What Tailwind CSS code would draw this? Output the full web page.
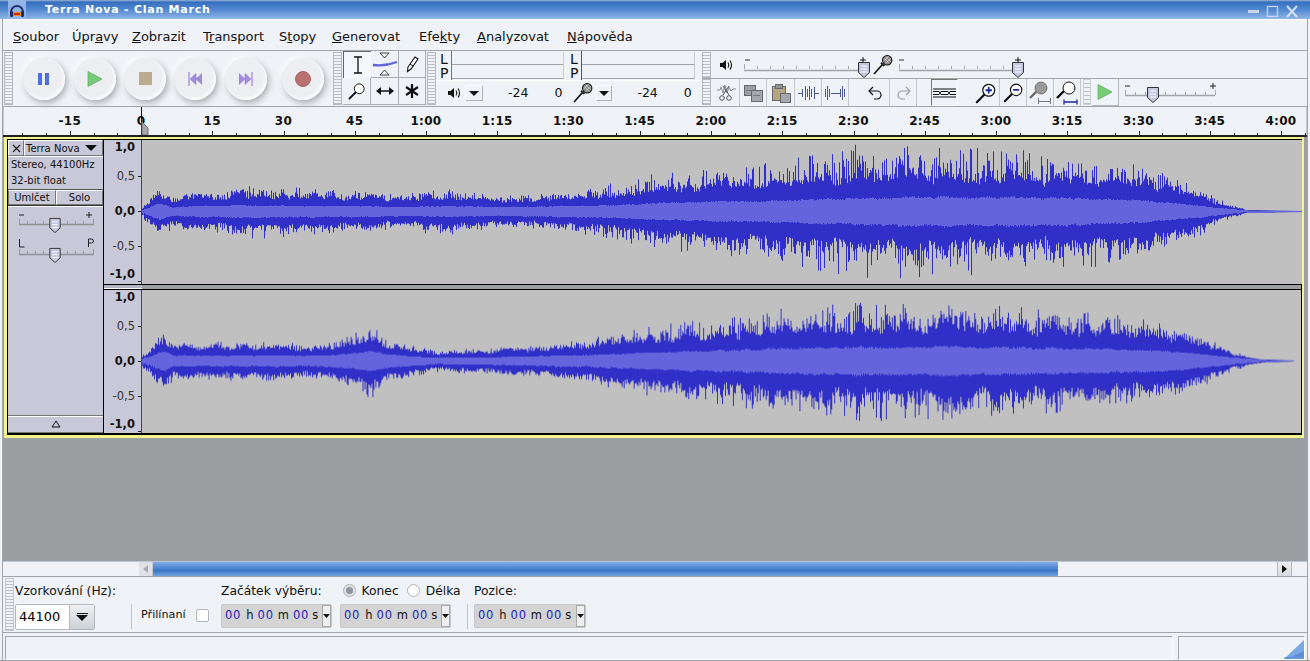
<!DOCTYPE html>
<html lang="cs">
<head>
<meta charset="UTF-8">
<title>Terra Nova - Clan March</title>
<script src="https://cdn.jsdelivr.net/npm/@tailwindcss/browser@4"></script>
</head>
<body class="bg-[#eff2f6]">
<svg class="hidden" width="0" height="0">
  <defs>
    <symbol id="thumb" viewBox="0 0 14 18"><path d="M1.500 1.500h11v10l-5.500 5-5.500-5z" fill="#c4c8e0" stroke="#333" stroke-width="1"/><path d="M4 5h6M4 8h6M4 11h6" stroke="#fff"/></symbol>
    <symbol id="spk" viewBox="0 0 14 14"><path d="M1 5h2.500l3.500-3v10l-3.500-3h-2.500z" fill="#111"/><path d="M9 4.500c1 1.500 1 3.500 0 5M11 2.500c2 2.500 2 6.500 0 9" fill="none" stroke="#111" stroke-width="1.100"/></symbol>
    <symbol id="mic" viewBox="0 0 20 20"><path d="M1 19l8-9" stroke="#111" stroke-width="1.600"/><path d="M7 9l3 3 1.500-1-3.500-3.500z" fill="#222"/><circle cx="13.500" cy="6" r="4.500" fill="#888" stroke="#111"/><path d="M10.500 4l5 5M12 2.500l5 5M15 2l-5 5M17 4l-5 5" stroke="#ddd" stroke-width=".6"/></symbol>
    <symbol id="lens" viewBox="0 0 24 24"><path d="M2 22l8-8" stroke="#111" stroke-width="2.400" stroke-linecap="round"/><circle cx="15" cy="9" r="6.500" fill="#fff" stroke="#111" stroke-width="1.300"/></symbol>
  </defs>
</svg>

<div class="w-[1310px] h-[661px] flex flex-col overflow-hidden bg-[#eff2f6] text-[12px] text-[#111] font-['DejaVu_Sans',sans-serif] border-b border-[#9a9ea2] relative">

  <!-- title bar -->
  <div class="h-[19px] shrink-0 flex items-center bg-[linear-gradient(to_bottom,#9db3d3_0,#356fbe_2px,#4f86cf_9px,#8fb5e8_19px)]">
    <div class="w-[18px] h-[19px] ml-[8px] bg-[#90b4e6] flex items-center justify-center">
      <svg width="16" height="16" viewBox="0 0 16 16"><path d="M2 10a6 6 0 0 1 12 0" fill="none" stroke="#22316e" stroke-width="2"/><rect x="1" y="9" width="3" height="6" rx="1" fill="#1c2a68"/><rect x="12" y="9" width="3" height="6" rx="1" fill="#1c2a68"/><rect x="4" y="10" width="8" height="4" fill="#e88a1c"/><path d="M5 12h6" stroke="#d02a20" stroke-width="2"/></svg>
    </div>
    <span class="ml-[19px] pt-[2px] text-white font-bold text-[11px] tracking-[0.75px]">Terra Nova - Clan March</span>
    <div class="ml-auto mr-[11px] pt-[3px] flex items-center gap-[6px]">
      <svg width="13" height="13" viewBox="0 0 13 13"><path d="M1 6.500h11" stroke="#c7d6ea" stroke-width="3"/></svg>
      <svg width="13" height="13" viewBox="0 0 13 13"><rect x="1.500" y="1.500" width="10" height="10" fill="none" stroke="#c7d6ea" stroke-width="1.300"/></svg>
      <svg width="14" height="13" viewBox="0 0 14 13"><path d="M2 1l10 11M12 1l-10 11" stroke="#d5e0ef" stroke-width="2"/></svg>
    </div>
  </div>

  <!-- menu -->
  <div class="h-[31px] shrink-0 mx-[3px] border-t border-white flex items-center pl-[10px] pt-[4px] text-[13px] whitespace-nowrap">
    <span class="w-[59px]"><u>S</u>oubor</span><span class="w-[60px]">Úpr<u>a</u>vy</span><span class="w-[71px]"><u>Z</u>obrazit</span><span class="w-[76px]">T<u>r</u>ansport</span><span class="w-[53px]">S<u>t</u>opy</span><span class="w-[87px]"><u>G</u>enerovat</span><span class="w-[58px]">Efe<u>k</u>ty</span><span class="w-[90px]"><u>A</u>nalyzovat</span><span><u>N</u>ápověda</span>
  </div>

  <!-- toolbars -->
  <div class="h-[57px] shrink-0 mx-[3px] border-y border-[#a3a6a9] flex pl-[1px]">
    <div class="w-[9px] my-[1px] border border-[#b6b9bd] bg-[repeating-linear-gradient(to_bottom,#eff2f6_0,#eff2f6_2px,#bcbfc3_2px,#bcbfc3_3px)]"></div>

    <!-- transport -->
    <div class="w-[320px] flex items-center">
      <div class="ml-[10px] w-[42px] h-[42px] rounded-full bg-[#eceef2] flex items-center justify-center shadow-[2px_3px_6px_#a9acb0,-2px_-2px_4px_#fff,inset_-2px_-2px_3px_#fafbfc]">
        <svg width="14" height="14" viewBox="0 0 14 14"><rect x="1" y="1" width="4" height="12" fill="#4d6fe2"/><rect x="8" y="1" width="4" height="12" fill="#4d6fe2"/></svg>
      </div>
      <div class="ml-[9px] w-[42px] h-[42px] rounded-full bg-[#eceef2] flex items-center justify-center shadow-[2px_3px_6px_#a9acb0,-2px_-2px_4px_#fff,inset_-2px_-2px_3px_#fafbfc]">
        <svg width="16" height="16" viewBox="0 0 16 16"><path d="M1 0.500l14 7.500-14 7.500z" fill="#77cc77" stroke="#5eaa5e" stroke-width=".7"/></svg>
      </div>
      <div class="ml-[8px] w-[42px] h-[42px] rounded-full bg-[#eceef2] flex items-center justify-center shadow-[2px_3px_6px_#a9acb0,-2px_-2px_4px_#fff,inset_-2px_-2px_3px_#fafbfc]">
        <div class="w-[13px] h-[13px] bg-[#b9ab8c]"></div>
      </div>
      <div class="ml-[8px] w-[42px] h-[42px] rounded-full bg-[#eceef2] flex items-center justify-center shadow-[2px_3px_6px_#a9acb0,-2px_-2px_4px_#fff,inset_-2px_-2px_3px_#fafbfc]">
        <svg width="14" height="14" viewBox="0 0 14 14"><path d="M1 0v14" stroke="#8e6fd0"/><path d="M8 1.500l-6 5.500 6 5.500zM14 1.500l-6 5.500 6 5.500z" fill="#a48cdc" stroke="#8e6fd0" stroke-width=".5"/></svg>
      </div>
      <div class="ml-[9px] w-[42px] h-[42px] rounded-full bg-[#eceef2] flex items-center justify-center shadow-[2px_3px_6px_#a9acb0,-2px_-2px_4px_#fff,inset_-2px_-2px_3px_#fafbfc]">
        <svg width="14" height="14" viewBox="0 0 14 14"><path d="M13 0v14" stroke="#8e6fd0"/><path d="M0 1.500l6 5.500-6 5.500zM6 1.500l6 5.500-6 5.500z" fill="#a48cdc" stroke="#8e6fd0" stroke-width=".5"/></svg>
      </div>
      <div class="ml-[15px] w-[42px] h-[42px] rounded-full bg-[#eceef2] flex items-center justify-center shadow-[2px_3px_6px_#a9acb0,-2px_-2px_4px_#fff,inset_-2px_-2px_3px_#fafbfc]">
        <div class="w-[16px] h-[16px] rounded-full bg-[#b97070] border border-[#a86464]"></div>
      </div>
    </div>

    <div class="w-[9px] my-[1px] border border-[#b6b9bd] bg-[repeating-linear-gradient(to_bottom,#eff2f6_0,#eff2f6_2px,#bcbfc3_2px,#bcbfc3_3px)]"></div>

    <!-- tools -->
    <div class="w-[83px] ml-[1px] grid grid-cols-[28px_28px_27px] grid-rows-[27px_27px] content-start">
      <div class="flex items-center justify-center border-l border-t border-[#666] border-b-white border-r-white bg-[#f5f7fa]">
        <svg width="12" height="18" viewBox="0 0 12 18"><path d="M2 1h8M6 1v16M2 17h8" stroke="#111" stroke-width="1.300"/></svg>
      </div>
      <div class="flex items-center justify-center border-r border-b border-[#a9acb0]">
        <svg width="26" height="24" viewBox="0 0 26 24"><path d="M8 1h9l-4.500 5zM8 23h9l-4.500-5z" fill="#fff" stroke="#111" stroke-width=".8"/><path d="M1 13c8 1 16 0 24-3" stroke="#6464dc" stroke-width="2.400" fill="none"/></svg>
      </div>
      <div class="flex items-center justify-center border-r border-b border-[#a9acb0]">
        <svg width="14" height="18" viewBox="0 0 14 18"><path d="M3 12l7-10 3 2-7 10-3.500 2.500z" fill="#fff" stroke="#111" stroke-width="1.100"/><path d="M5 9l3 2" stroke="#111"/></svg>
      </div>
      <div class="flex items-center justify-center border-r border-b border-[#a9acb0]">
        <svg width="18" height="18"><use href="#lens"/></svg>
      </div>
      <div class="flex items-center justify-center border-r border-b border-[#a9acb0]">
        <svg width="18" height="10" viewBox="0 0 18 10"><path d="M2 5h14" stroke="#111" stroke-width="1.500"/><path d="M0 5l5-4v8zM18 5l-5-4v8z" fill="#111"/></svg>
      </div>
      <div class="flex items-center justify-center border-r border-b border-[#a9acb0]">
        <svg width="14" height="14" viewBox="0 0 14 14"><path d="M7 0v14M1 3l12 8M13 3l-12 8" stroke="#111" stroke-width="2.200"/></svg>
      </div>
    </div>

    <div class="w-[9px] ml-[1px] my-[1px] border border-[#b6b9bd] bg-[repeating-linear-gradient(to_bottom,#eff2f6_0,#eff2f6_2px,#bcbfc3_2px,#bcbfc3_3px)]"></div>

    <!-- meters -->
    <div class="w-[265px] flex flex-col">
      <div class="h-[29px] flex">
        <div class="w-[130px] flex pl-[4px]">
          <div class="w-[11px] text-[14px] leading-[14px] pt-[1px]">L<br>P</div>
          <div class="w-[113px] flex flex-col border-l border-[#3e9a3e] pt-[1px]">
            <div class="h-[13px] border-b border-[#a3a6a9] border-r border-r-[#c9ccd0]"></div>
            <div class="h-[14px] border-b border-[#a3a6a9] border-r border-r-[#c9ccd0]"></div>
          </div>
        </div>
        <div class="w-[133px] flex pl-[4px]">
          <div class="w-[11px] text-[14px] leading-[14px] pt-[1px]">L<br>P</div>
          <div class="w-[114px] flex flex-col border-l border-[#a03838] pt-[1px]">
            <div class="h-[13px] border-b border-[#a3a6a9] border-r border-r-[#c9ccd0]"></div>
            <div class="h-[14px] border-b border-[#a3a6a9] border-r border-r-[#c9ccd0]"></div>
          </div>
        </div>
      </div>
      <div class="flex items-center h-[25px] text-[12px] border-t border-white">
        <svg class="ml-[11px]" width="14" height="14"><use href="#spk"/></svg>
        <div class="ml-[4px] w-[18px] h-[16px] border border-[#b0b4b8] border-t-white border-l-white flex items-center justify-center"><svg width="10" height="5"><path d="M0 0h10l-5 5z" fill="#111"/></svg></div>
        <span class="ml-[25px] text-[12.500px]">-24</span>
        <span class="ml-[26px] text-[12.500px]">0</span>
        <svg class="ml-[11px] -mt-[2px]" width="21" height="21"><use href="#mic"/></svg>
        <div class="ml-[2px] w-[16px] h-[16px] border border-[#b0b4b8] border-t-white border-l-white flex items-center justify-center"><svg width="10" height="5"><path d="M0 0h10l-5 5z" fill="#111"/></svg></div>
        <span class="ml-[25px] text-[12.500px]">-24</span>
        <span class="ml-[26px] text-[12.500px]">0</span>
      </div>
    </div>

    <!-- right dock, two rows -->
    <div class="flex-1 flex flex-col ml-[1px]">
      <div class="h-[28px] border-b border-[#a3a6a9] flex items-center">
        <div class="w-[9px] h-[26px] border border-[#b6b9bd] bg-[repeating-linear-gradient(to_bottom,#eff2f6_0,#eff2f6_2px,#bcbfc3_2px,#bcbfc3_3px)]"></div>
        <svg class="ml-[8px]" width="14" height="14"><use href="#spk"/></svg>
        <svg class="ml-[11px]" width="132" height="26" viewBox="0 0 132 26">
          <path d="M1 8h5" stroke="#333"/><path d="M0 18.500h120" stroke="#a3a6a9" stroke-width="1.500"/>
          <path d="M0.500 12v5M13.500 14v3M26.500 14v3M39.500 14v3M52.500 14v3M65.500 14v3M78.500 14v3M91.500 14v3M104.500 14v3M117.500 14v3" stroke="#aaa"/>
          <path d="M116 8h6M119 5v6" stroke="#111"/>
          <use href="#thumb" x="113" y="9" width="14" height="18"/>
        </svg>
        <svg class="ml-[-3px]" width="21" height="21"><use href="#mic"/></svg>
        <svg class="ml-[-1px]" width="134" height="26" viewBox="0 0 134 26">
          <path d="M6 8h5" stroke="#333"/><path d="M6 18.500h114" stroke="#a3a6a9" stroke-width="1.500"/>
          <path d="M6.500 12v5M19.500 14v3M32.500 14v3M45.500 14v3M58.500 14v3M71.500 14v3M84.500 14v3M97.500 14v3M110.500 14v3" stroke="#aaa"/>
          <path d="M122 8h6M125 5v6" stroke="#111"/>
          <use href="#thumb" x="118" y="9" width="14" height="18"/>
        </svg>
      </div>
      <div class="flex-1 flex items-start">
        <div class="w-[9px] h-[26px] border border-[#b6b9bd] bg-[repeating-linear-gradient(to_bottom,#eff2f6_0,#eff2f6_2px,#bcbfc3_2px,#bcbfc3_3px)]"></div>
        <!-- edit buttons -->
        <div class="w-[27px] h-[27px] ml-[2px] border-r border-[#c4c7cb] flex items-center justify-center">
          <svg width="21" height="21" viewBox="0 0 21 21"><path d="M1 8h3l1-3 2 6 2-8 2 8 2-6 2 4 2-2h3" fill="none" stroke="#8a8d92"/><path d="M7 13l6-9M13 13l-6-9" stroke="#555"/><circle cx="6" cy="16" r="2.300" fill="none" stroke="#555"/><circle cx="13" cy="16" r="2.300" fill="none" stroke="#555"/></svg>
        </div>
        <div class="w-[27px] h-[27px] border-r border-[#c4c7cb] flex items-center justify-center">
          <svg width="20" height="18" viewBox="0 0 20 18"><rect x="1.500" y="1.500" width="11" height="10" fill="#9b9ea3" stroke="#66686c"/><rect x="8.500" y="6.500" width="11" height="11" fill="#a4a7ac" stroke="#66686c"/><path d="M3 6.500h5M10 11.500h7" stroke="#777"/></svg>
        </div>
        <div class="w-[28px] h-[27px] border-r border-[#c4c7cb] flex items-center justify-center">
          <svg width="20" height="20" viewBox="0 0 20 20"><rect x="1.500" y="3.500" width="13" height="14" fill="#b5a67e" stroke="#66686c"/><rect x="4.500" y="1.500" width="7" height="4" fill="#8f9297" stroke="#66686c"/><rect x="9.500" y="10.500" width="10" height="9" fill="#a4a7ac" stroke="#66686c"/></svg>
        </div>
        <div class="w-[27px] h-[27px] border-r border-[#c4c7cb] flex items-center justify-center">
          <svg width="21" height="14" viewBox="0 0 21 14"><path d="M0 7.500h4M17 7.500h4M4.500 3v8M7.500 0v14M9.500 3v8M11.500 0v14M13.500 3v8M16.500 1v12" stroke="#4a5a90"/></svg>
        </div>
        <div class="w-[27px] h-[27px] border-r border-[#c4c7cb] flex items-center justify-center">
          <svg width="21" height="14" viewBox="0 0 21 14"><path d="M0.500 3v8M2.500 0v14M4.500 3v8M6 7.500h9M15.500 3v8M17.500 0v14M19.500 3v8" stroke="#4a5a90"/></svg>
        </div>
        <div class="w-[27px] h-[27px] ml-[14px] border-r border-[#c4c7cb] flex items-center justify-center">
          <svg width="16" height="14" viewBox="0 0 16 14"><path d="M5 1L1 5l4 4" fill="none" stroke="#111" stroke-width="1.200"/><path d="M1 5h8a4 4 0 0 1 0 8H6" fill="none" stroke="#111" stroke-width="1.200"/></svg>
        </div>
        <div class="w-[27px] h-[27px] border-r border-[#c4c7cb] flex items-center justify-center">
          <svg width="16" height="14" viewBox="0 0 16 14"><path d="M11 1l4 4-4 4" fill="none" stroke="#9a9da1" stroke-width="1.200"/><path d="M15 5H7a4 4 0 0 0 0 8h3" fill="none" stroke="#9a9da1" stroke-width="1.200"/></svg>
        </div>
        <div class="w-[27px] h-[27px] ml-[14px] border-l border-t border-[#777] border-r border-r-white border-b border-b-white flex items-center justify-center">
          <svg width="23" height="10" viewBox="0 0 23 10"><path d="M0 1h23M0 9h23M0 3.500h6l2 3h7l2-3h6M0 6.500h6l2-3h7l2 3h6" fill="none" stroke="#111"/></svg>
        </div>
        <div class="w-[27px] h-[27px] ml-[15px] border-r border-[#c4c7cb] flex items-center justify-center">
          <svg width="22" height="22" viewBox="0 0 24 24"><use href="#lens"/><path d="M11.500 9h7M15 5.500v7" stroke="#1a2aa0" stroke-width="2"/></svg>
        </div>
        <div class="w-[27px] h-[27px] border-r border-[#c4c7cb] flex items-center justify-center">
          <svg width="21" height="21" viewBox="0 0 24 24"><use href="#lens"/><path d="M11.500 9h7" stroke="#1a2aa0" stroke-width="2"/></svg>
        </div>
        <div class="w-[27px] h-[27px] border-r border-[#c4c7cb] flex items-center justify-center">
          <svg width="24" height="24" viewBox="0 0 24 24"><path d="M2 17l7-7" stroke="#666" stroke-width="2.400"/><circle cx="13" cy="7" r="6" fill="#999" stroke="#777"/><path d="M10 20.500h13M10.500 17v6M22.500 17v6" stroke="#777"/></svg>
        </div>
        <div class="w-[27px] h-[27px] border-r border-[#c4c7cb] flex items-center justify-center">
          <svg width="24" height="24" viewBox="0 0 24 24"><path d="M2 17l7-7" stroke="#111" stroke-width="2.400"/><circle cx="14" cy="7" r="6" fill="#fff" stroke="#111"/><path d="M9 21h13M9 18.500v5M22 18.500v5" stroke="#1a2aa0" stroke-width="1.300"/></svg>
        </div>
        <div class="w-[8px] h-[26px] ml-[2px] border border-[#d0d3d6] bg-[repeating-linear-gradient(to_bottom,#eff2f6_0,#eff2f6_3px,#bcbfc3_3px,#bcbfc3_4px)]"></div>
        <div class="w-[27px] h-[27px] ml-[1px] border-r border-b border-[#b5b8bc] flex items-center justify-center">
          <svg width="16" height="16" viewBox="0 0 16 16"><path d="M1 0.500l14 7.500-14 7.500z" fill="#77cc77" stroke="#5eaa5e" stroke-width=".7"/></svg>
        </div>
        <svg class="ml-[5px]" width="94" height="26" viewBox="0 0 94 26">
          <path d="M1 7h5M86 7h6M89 4v6" stroke="#222"/><path d="M1 16.500h90" stroke="#a3a6a9" stroke-width="1.500"/>
          <path d="M1.500 11v5M11.500 13v3M21.500 13v3M31.500 13v3M41.500 13v3M51.500 13v3M61.500 13v3M71.500 13v3M81.500 13v3M91.500 11v5" stroke="#aaa"/>
          <use href="#thumb" x="22" y="7" width="14" height="18"/>
        </svg>
      </div>
    </div>
  </div>

  <!-- ruler -->
  <div id="ruler" class="h-[28px] shrink-0 mx-[3px] relative border-x border-[#c6c9cd] overflow-hidden"></div>

  <!-- tracks area -->
  <div class="flex-1 mx-[3px] bg-[#9b9fa1] border-t-[2px] border-[#222]">
    <div class="ml-[1px] w-[1300px] border-[3px] border-r-[2px] border-t-[2px] border-[#f4f48c] h-[301px] bg-black">
      <div class="h-full w-full border-x border-b-2 border-black border-t-[1px] flex bg-[#c0c0c0]">
        <!-- track panel -->
        <div class="w-[96px] shrink-0 bg-[#c8c8d8] flex flex-col border-r border-black">
          <div class="h-[16px] flex text-[10px]">
            <div class="w-[16px] border border-white border-r-[#777] border-b-[#777] flex items-center justify-center"><svg width="9" height="9" viewBox="0 0 9 9"><path d="M1 1l7 7M8 1l-7 7" stroke="#111" stroke-width="1.200"/></svg></div>
            <div class="flex-1 border border-white border-r-[#777] border-b-[#777] flex items-center pl-[1px]">Terra Nova<svg class="ml-[5px]" width="12" height="6"><path d="M0 0h12l-6 6z" fill="#111"/></svg></div>
          </div>
          <div class="h-[34px] border-b border-[#555] text-[10px] leading-[16px] pl-[3px] border-t border-t-white"><div>Stereo, 44100Hz</div><div>32-bit float</div></div>
          <div class="h-[16px] flex text-[10px] leading-[13px] text-center border-b border-[#333]">
            <div class="w-[48px] border border-[#777] border-t-white">Umlčet</div>
            <div class="flex-1 border border-white border-r-[#777] border-b-[#777]">Solo</div>
          </div>
          <div class="h-[60px] border-t border-white">
            <svg width="94" height="60" viewBox="0 0 94 60">
              <path d="M11 8h5M78 8h6M81 5v6" stroke="#222"/><path d="M11 17.500h75" stroke="#8f9094" stroke-width="1.500"/>
              <path d="M11.500 12v5M19.500 14v3M27.500 14v3M35.500 14v3M43.500 14v3M59.500 14v3M67.500 14v3M75.500 14v3M85.500 12v5" stroke="#999"/>
              <use href="#thumb" x="40" y="10" width="14" height="17"/>
              <path d="M11.500 32v8h5M80.500 40v-8h3a2 2 0 0 1 0 4h-3" fill="none" stroke="#222"/><path d="M11 47.500h75" stroke="#8f9094" stroke-width="1.500"/>
              <path d="M11.500 42v5M19.500 44v3M27.500 44v3M35.500 44v3M59.500 44v3M67.500 44v3M75.500 44v3M85.500 42v5" stroke="#999"/>
              <use href="#thumb" x="40" y="40" width="14" height="17"/>
            </svg>
          </div>
          <div class="flex-1"></div>
          <div class="h-[18px] border-t border-t-[#777] flex items-center justify-center shadow-[inset_0_1px_0_#fff] border-b border-b-[#777]">
            <svg width="10" height="8" viewBox="0 0 10 8"><path d="M5 1l4 6H1z" fill="none" stroke="#111"/></svg>
          </div>
        </div>

        <!-- channels -->
        <div class="flex-1 flex flex-col min-w-0">
          <div class="h-[144px] flex">
            <div data-scale class="w-[38px] shrink-0 bg-[#c8c8d8] relative border-r border-[#444]"></div>
            <canvas id="wave1" width="1160" height="144" class="block"></canvas>
          </div>
          <div class="h-[6px] shrink-0 flex border-t border-b border-black">
            <div class="w-[38px] bg-[#b4b4c2] border-b border-white"></div>
            <div class="flex-1 bg-[#9b9fa1]"></div>
          </div>
          <div class="flex-1 flex overflow-hidden">
            <div data-scale class="w-[38px] shrink-0 bg-[#c8c8d8] relative border-r border-[#444]"></div>
            <canvas id="wave2" width="1160" height="144" class="block"></canvas>
          </div>
        </div>
      </div>
    </div>
  </div>

  <!-- horizontal scrollbar -->
  <div class="h-[15px] shrink-0 mx-[3px] flex items-center border-t border-[#b9c6d6]">
    <div class="ml-[136px] w-[14px] h-[15px] bg-[#dfe3e7] border-r border-[#c4c8cc] flex items-center justify-center"><svg width="5" height="8"><path d="M5 0v8l-5-4z" fill="#a9adb1"/></svg></div>
    <div class="w-[905px] h-[14px] bg-[linear-gradient(to_bottom,#80abe5_0,#4e86d4_45%,#3d75c6_60%,#74a2e0_100%)]"></div>
    <div class="w-[219px]"></div>
    <div class="w-[15px] h-[15px] bg-[linear-gradient(to_bottom,#eef0f3,#d5d9dd)] border-x border-[#b5b9bd] flex items-center justify-center"><svg width="5" height="8"><path d="M0 0v8l5-4z" fill="#111"/></svg></div>
  </div>

  <!-- selection bar -->
  <div class="h-[57px] shrink-0 mx-[3px] border-y border-[#a3a6a9] flex">
    <div class="w-[9px] ml-[2px] my-[1px] border border-[#c6c9cc] bg-[repeating-linear-gradient(to_bottom,#eff2f6_0,#eff2f6_2px,#bcbfc3_2px,#bcbfc3_3px)]"></div>
    <div class="w-[116px] ml-[1px] flex flex-col">
      <div class="h-[27px] pt-[5px] text-[12.300px]">Vzorkování (Hz):</div>
      <div class="w-[80px] h-[26px] flex border border-[#b5b9bd] bg-white rounded-[2px]">
        <div class="w-[53px] pl-[3px] leading-[24px] text-[13px] text-black">44100</div>
        <div class="flex-1 bg-[linear-gradient(to_bottom,#eef0f3,#cdd2d6)] border-l border-[#b5b9bd] flex flex-col items-center justify-center gap-[1px]"><div class="w-[11px] h-[1px] bg-[#111]"></div><svg width="12" height="6"><path d="M0 0h12l-6 6z" fill="#111"/></svg></div>
      </div>
    </div>
    <div class="w-[1px] h-[25px] mt-[27px] bg-[#c2c6ca]"></div>
    <div class="ml-[9px] w-[80px] flex items-center mt-[22px] gap-[10px]">
      <span class="text-[11.200px]">Přilínaní</span>
      <div class="w-[13px] h-[13px] shrink-0 bg-white border border-[#b0b5ba] rounded-[2px]"></div>
    </div>
    <div class="w-[246px] flex flex-col">
      <div class="h-[27px] pt-[5px] flex items-start text-[12.300px]">
        <span>Začátek výběru:</span>
        <div class="ml-[21px] mt-[2px] w-[13px] h-[13px] rounded-full border border-[#b0b5ba] bg-[#dfe2e6] flex items-center justify-center"><div class="w-[7px] h-[7px] rounded-full bg-[#8f95a0]"></div></div>
        <span class="ml-[6px]">Konec</span>
        <div class="ml-[8px] mt-[2px] w-[13px] h-[13px] rounded-full border border-[#b0b5ba] bg-white"></div>
        <span class="ml-[6px]">Délka</span>
      </div>
      <div class="flex gap-[8px]">
        <div class="w-[111px] h-[24px] bg-[#d4d4d4] border border-[#c2c6ca] rounded-[2px] flex items-center pl-[3px] text-[11.500px] whitespace-nowrap"><span class="text-[#1c1cc0] tracking-[0.8px]">00</span><span class="ml-[5px]">h</span><span class="ml-[4px] text-[#1c1cc0] tracking-[0.8px]">00</span><span class="ml-[4px]">m</span><span class="ml-[4px] text-[#1c1cc0] tracking-[0.8px]">00</span><span class="ml-[3px]">s</span><div class="ml-auto w-[9px] h-full bg-[#eceef0] border border-[#aaa] flex items-center justify-center"><svg width="7" height="4"><path d="M0 0h7l-3.500 4z" fill="#111"/></svg></div></div>
        <div class="w-[111px] h-[24px] bg-[#d4d4d4] border border-[#c2c6ca] rounded-[2px] flex items-center pl-[3px] text-[11.500px] whitespace-nowrap"><span class="text-[#1c1cc0] tracking-[0.8px]">00</span><span class="ml-[5px]">h</span><span class="ml-[4px] text-[#1c1cc0] tracking-[0.8px]">00</span><span class="ml-[4px]">m</span><span class="ml-[4px] text-[#1c1cc0] tracking-[0.8px]">00</span><span class="ml-[3px]">s</span><div class="ml-auto w-[9px] h-full bg-[#eceef0] border border-[#aaa] flex items-center justify-center"><svg width="7" height="4"><path d="M0 0h7l-3.500 4z" fill="#111"/></svg></div></div>
      </div>
    </div>
    <div class="w-[1px] h-[25px] mt-[27px] bg-[#c2c6ca]"></div>
    <div class="ml-[6px] w-[113px] flex flex-col">
      <div class="h-[27px] pt-[5px] text-[12.300px]">Pozice:</div>
      <div class="w-[112px] h-[24px] bg-[#d4d4d4] border border-[#c2c6ca] rounded-[2px] flex items-center pl-[3px] text-[11.500px] whitespace-nowrap"><span class="text-[#1c1cc0] tracking-[0.8px]">00</span><span class="ml-[5px]">h</span><span class="ml-[4px] text-[#1c1cc0] tracking-[0.8px]">00</span><span class="ml-[4px]">m</span><span class="ml-[4px] text-[#1c1cc0] tracking-[0.8px]">00</span><span class="ml-[3px]">s</span><div class="ml-auto w-[9px] h-full bg-[#eceef0] border border-[#aaa] flex items-center justify-center"><svg width="7" height="4"><path d="M0 0h7l-3.500 4z" fill="#111"/></svg></div></div>
    </div>
  </div>

  <!-- status bar -->
  <div class="h-[24px] shrink-0 mx-[5px] mt-[3px] flex gap-[5px]">
    <div class="flex-1 border border-[#a3a6a9] border-r-white border-b-white"></div>
    <div class="w-[127px] border border-[#a3a6a9] border-r-white border-b-white relative overflow-hidden">
      <svg class="absolute right-0 bottom-0" width="20" height="20" viewBox="0 0 20 20"><path d="M20 1v19H0z" fill="#7ba6e6"/><path d="M20 12v6H5l-2 2z" fill="#5f8dd6"/><path d="M0 19h20" stroke="#4e86d8"/></svg>
    </div>
  </div>

  <div class="absolute left-0 top-[19px] bottom-0 w-[3px] border-l-2 border-r border-l-[#eff2f6] border-r-[#a3a6a9]"></div>
  <div class="absolute right-0 top-[19px] bottom-0 w-[3px] border-l border-[#a3a6a9]"></div>
</div>

<script>
  // ruler labels and ticks
  const ruler = document.getElementById('ruler');
  const zeroX = 141 - 4, secPx = 71.25 / 15;
  function fmt(s) {
    if (s < 0) return '-' + Math.abs(s);
    if (s < 60) return String(s);
    return Math.floor(s / 60) + ':' + String(s % 60).padStart(2, '0');
  }
  for (let s = -25; s <= 245; s += 5) {
    const x = zeroX + s * secPx;
    if (x < 3) continue;
    const major = s % 15 === 0;
    const tick = document.createElement('div');
    tick.className = major ? 'absolute bottom-[0px] w-[1px] h-[4px] bg-[#222]' : 'absolute bottom-[0px] w-[1px] h-[2px] bg-[#222]';
    tick.style.left = x + 'px';
    ruler.appendChild(tick);
    if (major) {
      const lab = document.createElement('span');
      lab.className = 'absolute top-[5px] -translate-x-1/2 font-bold text-[12px] tracking-[0.3px] whitespace-nowrap';
      lab.style.left = x + 'px';
      lab.textContent = fmt(s);
      ruler.appendChild(lab);
    }
  }
  // playhead at zero
  ruler.insertAdjacentHTML('beforeend', '<div class="absolute left-[137px] top-0 bottom-0 w-[1px] bg-[#111]"></div><svg class="absolute left-[137px] bottom-0" width="8" height="14"><path d="M1 1l6 6v7H1z" fill="#a8a8a8" stroke="#777"/></svg>');

  // vertical scales
  document.querySelectorAll('[data-scale]').forEach(el => {
    const rows = [['1,0', 9, 1, 0], ['0,5', 38, 0, 36], ['0,0', 73, 1, 71], ['-0,5', 108, 0, 106], ['-1,0', 136, 1, 141]];
    rows.forEach(([t, y, bold, mark]) => {
      const s = document.createElement('span');
      s.className = bold ? 'absolute right-[6px] -translate-y-1/2 font-bold text-[11.500px]' : 'absolute right-[6px] -translate-y-1/2 text-[11.500px] text-[#333]';
      s.style.top = y - 1 + 'px';
      s.textContent = t;
      el.appendChild(s);
      if (mark) {
        const m = document.createElement('div');
        m.className = 'absolute right-0 w-[3px] h-[1px] bg-[#222]';
        m.style.top = mark + 'px';
        el.appendChild(m);
      }
    });
  });

  // waveforms, from hand-read envelopes: [x, rms, body, peak]
  const env1 = [[0,1,3,6],[8,4,9,14],[18,8,18,24],[30,4,13,18],[60,5,14,18],[115,6,18,28],[160,5,15,23],[210,5,14,20],[260,4,12,18],[300,5,15,24],[360,4,11,15],[420,5,14,19],[470,6,18,28],[510,8,24,38],[560,9,27,42],[620,10,30,48],[670,12,36,58],[720,13,38,68],[800,14,38,66],[860,14,37,62],[930,13,35,58],[990,11,31,50],[1030,8,23,34],[1060,5,15,23],[1080,3,7,12],[1104,0.5,1,1],[1160,0,0,0]];
  const env2 = [[0,2,4,8],[10,5,11,16],[22,10,24,31],[32,5,14,18],[60,5,15,20],[120,5,14,20],[180,5,13,17],[210,7,18,25],[230,10,26,38],[250,6,15,20],[290,3,8,12],[340,3,9,12],[420,5,13,17],[470,6,18,28],[510,8,23,36],[570,10,29,42],[640,12,34,52],[720,14,38,60],[800,14,38,60],[880,13,36,56],[960,12,34,50],[1030,10,28,38],[1070,6,17,24],[1100,3,6,9],[1128,0.5,1,1],[1160,0,0,0]];

  function lerp(env, x, i) {
    for (let k = 1; k < env.length; k++) {
      if (x <= env[k][0]) {
        const a = env[k - 1], b = env[k], t = (x - a[0]) / (b[0] - a[0]);
        return a[i] + (b[i] - a[i]) * t;
      }
    }
    return 0;
  }

  function drawWave(id, env, seed) {
    const ctx = document.getElementById(id).getContext('2d');
    let r = seed;
    const rnd = () => (r = (r * 16807) % 2147483647) / 2147483647;
    // slow wobble so the outline isn't a clean curve
    const knots = [];
    for (let i = 0; i < 200; i++) knots.push(0.82 + 0.36 * rnd());
    const wobble = x => {
      const p = x / 7, i = Math.floor(p), t = p - i;
      return knots[i] * (1 - t) + knots[i + 1] * t;
    };
    const mid = 71;
    ctx.fillStyle = '#c0c0c0';
    ctx.fillRect(0, 0, 1160, 144);
    ctx.fillStyle = '#555';
    ctx.fillRect(1090, mid, 70, 1);
    for (let x = 0; x < 1160; x++) {
      const w = wobble(x);
      const rms = lerp(env, x, 1), body = lerp(env, x, 2) * w, peak = Math.max(lerp(env, x, 3), body);
      if (peak <= 0) continue;
      const h = () => {
        const p = rnd();
        if (p < 0.07) return body + (peak - body) * (0.7 + 0.3 * rnd());
        if (p < 0.42) return body + (peak - body) * 0.6 * rnd();
        return body * (0.78 + 0.24 * rnd());
      };
      const up = h(), down = h();
      ctx.fillStyle = '#3030c8';
      ctx.fillRect(x, mid - up, 1, up + down + 1);
      const r1 = rms * (0.9 + 0.15 * rnd()) * (0.6 + 0.4 * w), r2 = rms * (0.9 + 0.15 * rnd()) * (0.6 + 0.4 * w);
      ctx.fillStyle = '#6464dc';
      ctx.fillRect(x, Math.round(mid - r1), 1, Math.round(r1 + r2) + 1);
    }
  }
  drawWave('wave1', env1, 12345);
  drawWave('wave2', env2, 67891);
</script>
</body>
</html>
